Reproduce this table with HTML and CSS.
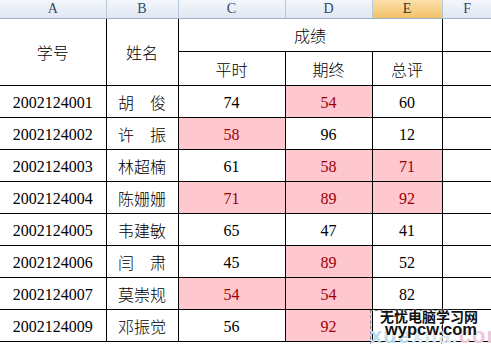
FILE: index.html
```html
<!DOCTYPE html>
<html>
<head>
<meta charset="utf-8">
<link rel="stylesheet" href="styles.css">
</head>
<body>
<div class="sheet">
<table class="grid">
<colgroup>
<col class="c-a"><col class="c-b"><col class="c-c"><col class="c-d"><col class="c-e"><col class="c-f">
</colgroup>
<tr class="colhead">
<th>A</th><th>B</th><th>C</th><th>D</th><th class="sel">E</th><th class="last">F</th>
</tr>
<tr class="h1">
<td rowspan="2" class="cjk">学号</td>
<td rowspan="2" class="cjk">姓名</td>
<td colspan="3" class="cjk">成绩</td>
<td></td>
</tr>
<tr class="h2">
<td class="cjk">平时</td><td class="cjk">期终</td><td class="cjk">总评</td><td></td>
</tr>
<tr class="row"><td class="num">2002124001</td><td class="cjk">胡　俊</td><td class="num">74</td><td class="num bad">54</td><td class="num">60</td><td></td></tr>
<tr class="row"><td class="num">2002124002</td><td class="cjk">许　振</td><td class="num bad">58</td><td class="num">96</td><td class="num">12</td><td></td></tr>
<tr class="row"><td class="num">2002124003</td><td class="cjk">林超楠</td><td class="num">61</td><td class="num bad">58</td><td class="num bad">71</td><td></td></tr>
<tr class="row"><td class="num">2002124004</td><td class="cjk">陈姗姗</td><td class="num bad">71</td><td class="num bad">89</td><td class="num bad">92</td><td></td></tr>
<tr class="row"><td class="num">2002124005</td><td class="cjk">韦建敏</td><td class="num">65</td><td class="num">47</td><td class="num">41</td><td></td></tr>
<tr class="row"><td class="num">2002124006</td><td class="cjk">闫　肃</td><td class="num">45</td><td class="num bad">89</td><td class="num">52</td><td></td></tr>
<tr class="row"><td class="num">2002124007</td><td class="cjk">莫崇规</td><td class="num bad">54</td><td class="num bad">54</td><td class="num">82</td><td></td></tr>
<tr class="row"><td class="num">2002124009</td><td class="cjk">邓振觉</td><td class="num">56</td><td class="num bad">92</td><td class="num"></td><td></td></tr>
</table>
<div class="marquee"></div>
<div class="watermark">
<div class="ghost"><span class="g1">xue</span><span class="g2">xila.</span><span class="g3">com</span></div>
<div class="wm1">无忧电脑学习网</div>
<div class="wm2">wypcw.com</div>
</div>
</div>
</body>
</html>
```
FILE: styles.css
```css
html, body {
  margin: 0;
  padding: 0;
  background: #fff;
  overflow: hidden;
}
.sheet {
  position: relative;
  width: 491px;
  height: 344px;
  overflow: hidden;
}
.grid {
  border-collapse: collapse;
  table-layout: fixed;
  width: 492px;
}
.c-a { width: 106px; }
.c-b { width: 72px; }
.c-c { width: 107px; }
.c-d { width: 87px; }
.c-e { width: 70px; }
.c-f { width: 50px; }

.colhead th {
  height: 18px;
  padding: 0;
  font-family: "Liberation Serif", serif;
  font-weight: normal;
  font-size: 14px;
  color: #34486a;
  background: linear-gradient(#f3f6fb, #dfe7f2);
  border-right: 1px solid #b8c8dc;
  border-bottom: 1px solid #9fb3cb;
  text-align: center;
  line-height: 18px;
}
.colhead th.sel {
  background: linear-gradient(#fbe0a8, #f2c16a);
  color: #3d3320;
}
.colhead th.last { border-right: none; }

td {
  padding: 0;
  border: 1px solid #000;
  text-align: center;
  color: #000;
  line-height: 18px;
}
tr.h1 td:first-child, tr.h2 td:first-child, tr.row td:first-child { border-left: none; }
tr.h1 td { border-top: none; height: 32px; }
tr.h2 td { height: 33px; }
tr.row td { height: 29px; padding-top: 2px; }

.cjk {
  font-family: "Noto Sans CJK SC", sans-serif;
  font-weight: 300;
  font-size: 16px;
}
tr.row td.cjk { padding-top: 0; height: 31px; }
.num {
  font-family: "Liberation Serif", serif;
  font-size: 16px;
}
.bad {
  background: #ffc7ce;
  color: #9c0006;
}

.marquee {
  position: absolute;
  left: 370px;
  top: 310px;
  width: 72px;
  height: 40px;
  border: 1px dashed #888;
  box-sizing: border-box;
}
.watermark {
  position: absolute;
  left: 370px;
  top: 309px;
  width: 121px;
  height: 35px;
}
.ghost {
  position: absolute;
  left: 0;
  top: 14px;
  font-family: "Liberation Sans", sans-serif;
  font-weight: bold;
  font-size: 22px;
  letter-spacing: 1px;
  white-space: nowrap;
}
.g1 { color: #b9dbea; }
.g2 { color: #d8e6ee; }
.g3 { color: #f0c6d8; }
.wm1 {
  position: absolute;
  left: 10px;
  top: 0;
  font-family: "Noto Sans CJK SC", sans-serif;
  font-weight: bold;
  font-size: 14px;
  line-height: 15px;
  letter-spacing: 0;
  color: #111;
  white-space: nowrap;
  text-shadow: 0 0 2px #fff, 0 0 2px #fff;
}
.wm2 {
  position: absolute;
  left: 15px;
  top: 11px;
  font-family: "Liberation Sans", sans-serif;
  font-weight: bold;
  font-size: 16.5px;
  line-height: 18px;
  color: #111;
  white-space: nowrap;
  text-shadow: 0 0 2px #fff, 0 0 2px #fff;
}
```
